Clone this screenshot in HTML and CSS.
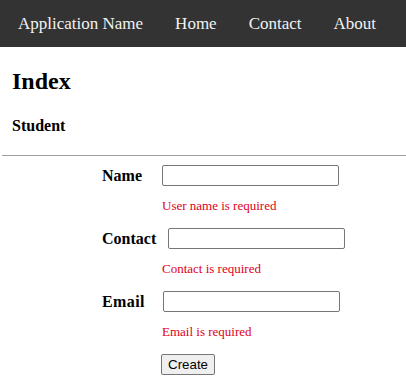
FILE: index.html
```html
<!DOCTYPE html>
<html>
<head>
<meta charset="utf-8">
<link rel="stylesheet" href="styles.css">
</head>
<body>
<nav class="navbar">
  <a class="nav-link" href="#">Application Name</a>
  <a class="nav-link" href="#">Home</a>
  <a class="nav-link" href="#">Contact</a>
  <a class="nav-link" href="#">About</a>
</nav>
<main class="content">
  <h1 class="title">Index</h1>
  <h4 class="subtitle">Student</h4>
</main>
<hr class="divider">
<form class="student-form">
  <div class="field-row">
    <label class="field-label">Name</label>
    <input class="field-input" type="text">
  </div>
  <div class="field-error">User name is required</div>
  <div class="field-row">
    <label class="field-label field-label-wide">Contact</label>
    <input class="field-input" type="text">
  </div>
  <div class="field-error">Contact is required</div>
  <div class="field-row">
    <label class="field-label field-label-email">Email</label>
    <input class="field-input" type="text">
  </div>
  <div class="field-error">Email is required</div>
  <div class="actions">
    <button class="create-btn" type="button">Create</button>
  </div>
</form>
</body>
</html>
```

FILE: styles.css
```css
html, body {
  margin: 0;
  padding: 0;
  background: #fff;
  font-family: "Liberation Serif", "Times New Roman", serif;
  color: #000;
}

.navbar {
  display: flex;
  align-items: center;
  height: 47px;
  background: #333333;
  padding-left: 2px;
}

.nav-link {
  color: #f2f2f2;
  text-decoration: none;
  font-size: 17px;
  padding: 0 16px;
}

.content {
  padding: 21px 12px 0;
}

.title {
  font-size: 24px;
  font-weight: bold;
  margin: 0 0 22px;
  line-height: normal;
}

.subtitle {
  font-size: 16px;
  font-weight: bold;
  margin: 0;
  line-height: normal;
}

.divider {
  margin: 20px 0 0 2px;
  border: 0;
  border-top: 1px solid #a0a0a0;
  height: 0;
}

.student-form {
  padding: 9px 0 0 102px;
}

.field-row {
  display: flex;
  align-items: center;
  height: 21px;
}

.field-label {
  font-size: 16px;
  font-weight: bold;
  width: 60px;
  flex: none;
}

.field-label-wide {
  width: 66px;
}

.field-label-email {
  width: 61px;
  letter-spacing: 0.4px;
}

.field-input {
  box-sizing: border-box;
  width: 177px;
  height: 21px;
  margin: 0;
  border: 1px solid #767676;
  border-radius: 2px;
  padding: 1px 2px;
  background: #fff;
}

.field-error {
  color: #e2001a;
  font-size: 13px;
  line-height: 15px;
  margin: 12px 0 15px 60px;
}

.actions {
  padding-left: 59px;
}

.create-btn {
  font-family: "Liberation Sans", Arial, sans-serif;
  font-size: 13.33px;
  height: 21px;
  padding: 1px 6px;
  margin: 0;
  border: 1px solid #767676;
  border-radius: 2px;
  background: #efefef;
  color: #000;
}
```
